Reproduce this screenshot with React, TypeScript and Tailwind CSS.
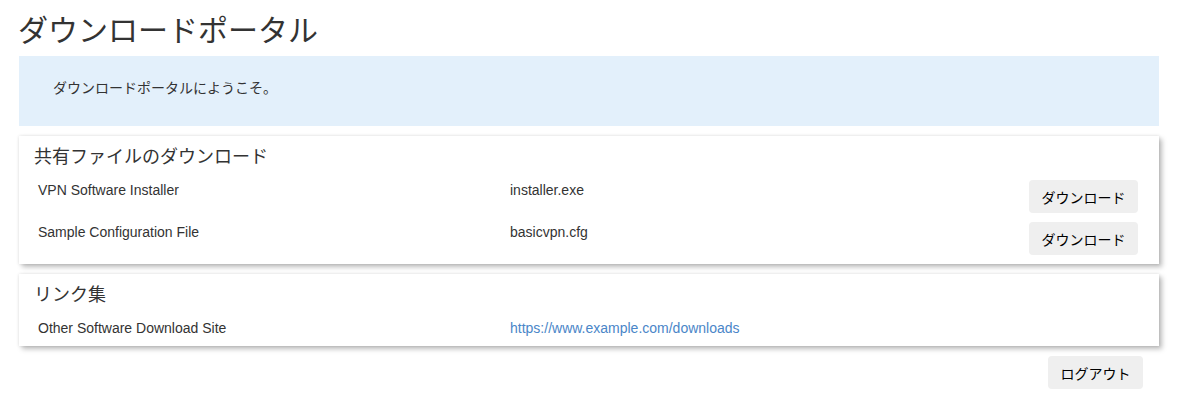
import React from "react";

const jp = "font-['Liberation_Sans','Noto_Sans_CJK_JP',sans-serif]";

function Btn({ children }: { children: React.ReactNode }) {
  return (
    <button className="h-[33px] px-[12.5px] rounded-[4px] bg-[#efefef] text-[14px] text-black font-['Noto_Sans_CJK_JP',sans-serif] leading-none">
      {children}
    </button>
  );
}

const card =
  "bg-white shadow-[3px_3px_5px_rgba(0,0,0,0.26),0_0_3px_rgba(0,0,0,0.12)]";

export default function App() {
  const files = [
    { name: "VPN Software Installer", file: "installer.exe" },
    { name: "Sample Configuration File", file: "basicvpn.cfg" },
  ];
  return (
    <div className={`${jp} text-[#333] bg-white min-h-[400px] pl-[19px] pr-[20px]`}>
      <h1 className="text-[30px] leading-[36px] pt-[10px] pb-[10px] -ml-[1px] font-['Noto_Sans_CJK_JP',sans-serif] font-normal">
        ダウンロードポータル
      </h1>
      <div className="bg-[#e3f0fb] pt-[21px] pb-[29px] px-[34px] text-[14px] leading-[20px] font-['Noto_Sans_CJK_JP',sans-serif]">
        ダウンロードポータルにようこそ。
      </div>

      <div className={`${card} mt-[10px] pt-[9px] pb-[9px] px-[15px]`}>
        <h2 className="text-[18px] leading-[20px] font-['Noto_Sans_CJK_JP',sans-serif] font-normal">
          共有ファイルのダウンロード
        </h2>
        <div className="mt-[15px] pl-[4px] pr-[6px] flex flex-col gap-[9px]">
          {files.map((f) => (
            <div key={f.name} className="grid grid-cols-[472px_1fr_auto] text-[14px] leading-[21px]">
              <div>{f.name}</div>
              <div>{f.file}</div>
              <Btn>ダウンロード</Btn>
            </div>
          ))}
        </div>
      </div>

      <div className={`${card} mt-[10px] pt-[9px] pb-[8px] px-[15px]`}>
        <h2 className="text-[18px] leading-[20px] font-['Noto_Sans_CJK_JP',sans-serif] font-normal">
          リンク集
        </h2>
        <div className="mt-[15px] pl-[4px] grid grid-cols-[472px_1fr] text-[14px] leading-[20px]">
          <div>Other Software Download Site</div>
          <a className="text-[#4a86c8]" href="#">https://www.example.com/downloads</a>
        </div>
      </div>

      <div className="flex justify-end mt-[10px] pr-[16px]">
        <Btn>ログアウト</Btn>
      </div>
    </div>
  );
}
